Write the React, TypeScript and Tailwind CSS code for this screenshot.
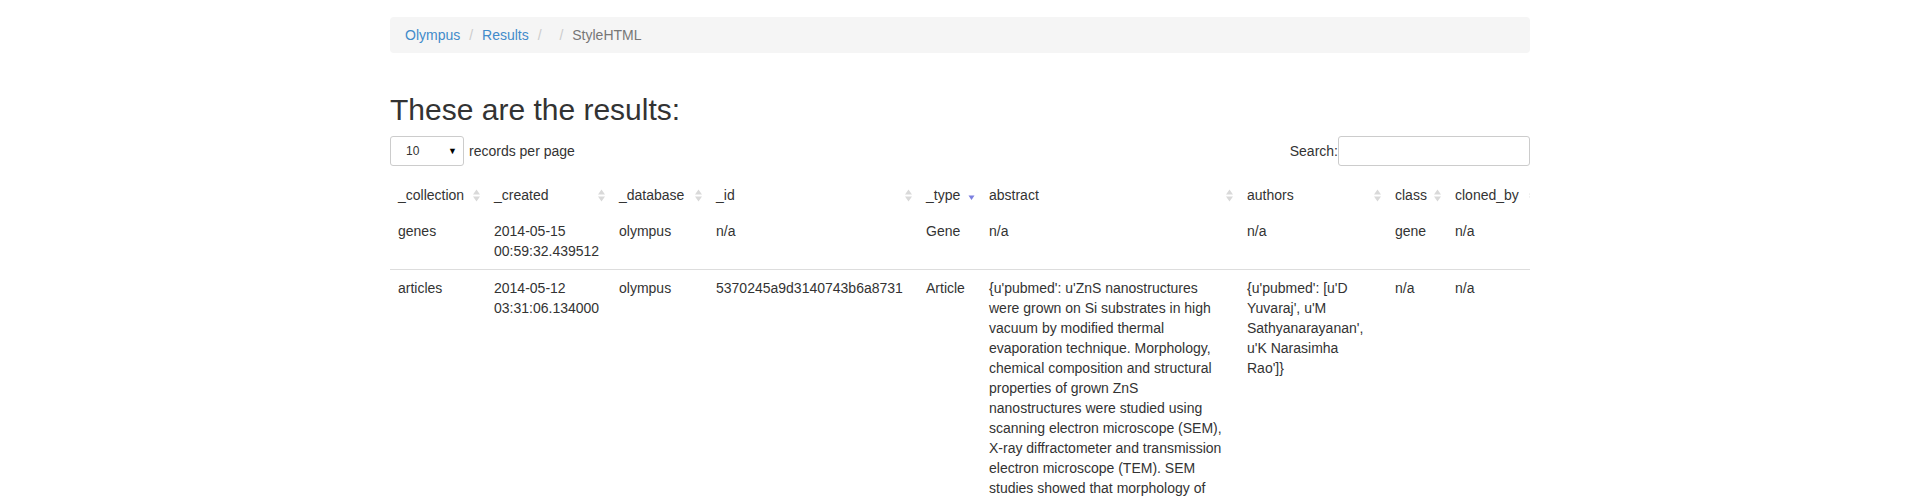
type Crumb = { label: string; active?: boolean };

const crumbs: Crumb[] = [
  { label: "Olympus" },
  { label: "Results" },
  { label: "" },
  { label: "StyleHTML", active: true },
];

type Column = { key: string; width: string; sort?: "both" | "desc" };

const columns: Column[] = [
  { key: "_collection", width: "w-[96px]", sort: "both" },
  { key: "_created", width: "w-[125px]", sort: "both" },
  { key: "_database", width: "w-[97px]", sort: "both" },
  { key: "_id", width: "w-[210px]", sort: "both" },
  { key: "_type", width: "w-[63px]", sort: "desc" },
  { key: "abstract", width: "w-[258px]", sort: "both" },
  { key: "authors", width: "w-[148px]", sort: "both" },
  { key: "class", width: "w-[60px]", sort: "both" },
  { key: "cloned_by", width: "w-[95px]", sort: "both" },
];

const rows: string[][] = [
  ["genes", "2014-05-15 00:59:32.439512", "olympus", "n/a", "Gene", "n/a", "n/a", "gene", "n/a"],
  [
    "articles",
    "2014-05-12 03:31:06.134000",
    "olympus",
    "5370245a9d3140743b6a8731",
    "Article",
    "{u'pubmed': u'ZnS nanostructures were grown on Si substrates in high vacuum by modified thermal evaporation technique. Morphology, chemical composition and structural properties of grown ZnS nanostructures were studied using scanning electron microscope (SEM), X-ray diffractometer and transmission electron microscope (TEM). SEM studies showed that morphology of the ZnS nanostructures depends on the substrate temperature and the growth time.'}",
    "{u'pubmed': [u'D Yuvaraj', u'M Sathyanarayanan', u'K Narasimha Rao']}",
    "n/a",
    "n/a",
  ],
];

// column 5 (abstract) wraps a touch earlier in the original rendering
const cellPad = (c: number) => (c === 5 ? "py-[8px] pl-[8px] pr-[14px]" : "p-[8px]");

function SortBoth() {
  return (
    <svg width="7" height="13" viewBox="0 0 7 13" className="shrink-0">
      <path d="M0 5.5 L3.5 0.5 L7 5.5Z M0 7.5 L3.5 12.5 L7 7.5Z" fill="#d9d9d9" />
    </svg>
  );
}

function SortDesc() {
  return (
    <svg width="7" height="13" viewBox="0 0 7 13" className="shrink-0">
      <path d="M0.5 6.5 L3.5 11 L6.5 6.5Z" fill="#7b7fe0" />
    </svg>
  );
}

export default function App() {
  return (
    <div className="min-h-[500px] bg-white font-['Liberation_Sans',Arial,sans-serif] text-[14px] leading-[20px] text-[#333]">
      <div className="mx-auto w-[1170px] px-[15px] pt-[17px]">
        <ol className="flex gap-[4px] rounded-[4px] bg-[#f5f5f5] px-[15px] py-[8px]">
          {crumbs.map((c, i) => (
            <li key={i} className="flex">
              {i > 0 && <span className="px-[5px] text-[#ccc]">/&nbsp;</span>}
              {c.active ? (
                <span className="text-[#777]">{c.label}</span>
              ) : (
                <a href="#" className="text-[#428bca]">
                  {c.label}
                </a>
              )}
            </li>
          ))}
        </ol>

        <h2 className="mb-[10px] mt-[40px] text-[30px] font-medium leading-[33px]">
          These are the results:
        </h2>

        <div className="flex h-[30px] items-center justify-between">
          <div className="flex items-center gap-[5px]">
            <div className="flex h-[30px] w-[74px] items-center justify-between rounded-[3px] border border-[#ccc] pl-[15px] pr-[6px] text-[12px] text-[#333]">
              <span>10</span>
              <span className="text-[9px] text-black">▼</span>
            </div>
            <span>records per page</span>
          </div>
          <label className="flex items-center">
            <span>Search:</span>
            <input className="h-[30px] w-[192px] rounded-[3px] border border-[#ccc] px-[10px] text-[12px] outline-none" />
          </label>
        </div>

        <div className="mt-[11px] overflow-hidden">
          <table className="w-[1152px] table-fixed border-collapse">
            <thead>
              <tr>
                {columns.map((col) => (
                  <th key={col.key} className={`${col.width} py-[8px] pl-[8px] pr-[6px] text-left font-normal`}>
                    <div className="flex items-center justify-between">
                      <span className="whitespace-nowrap">{col.key}</span>
                      {col.sort === "desc" ? <SortDesc /> : <SortBoth />}
                    </div>
                  </th>
                ))}
              </tr>
            </thead>
            <tbody>
              {rows.map((row, r) => (
                <tr key={r} className={r > 0 ? "border-t border-[#ddd]" : ""}>
                  {row.map((cell, c) => (
                    <td key={c} className={`${cellPad(c)} break-words align-top`}>
                      {cell}
                    </td>
                  ))}
                </tr>
              ))}
            </tbody>
          </table>
        </div>
      </div>
    </div>
  );
}
